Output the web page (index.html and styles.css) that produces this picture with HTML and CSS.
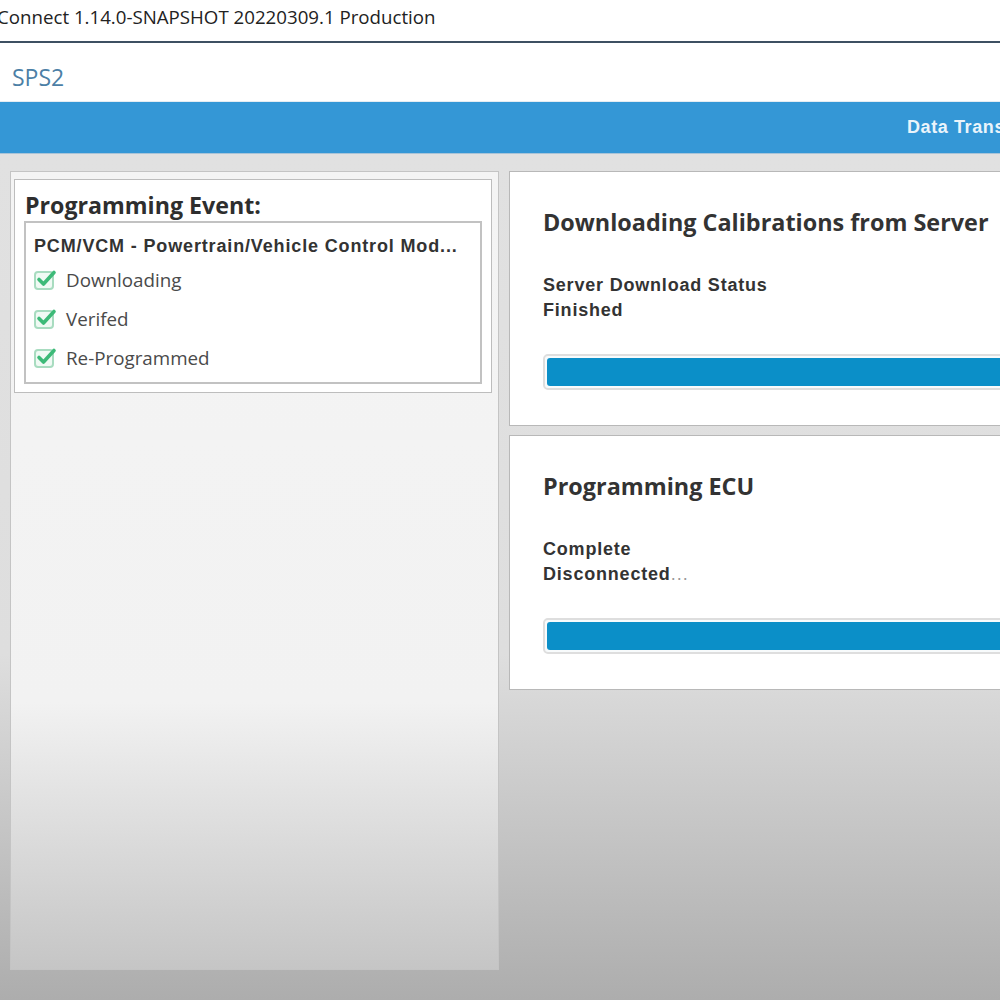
FILE: index.html
```html
<!DOCTYPE html>
<html>
<head>
<meta charset="utf-8">
<link rel="stylesheet" href="styles.css">
</head>
<body>
<div class="titlebar"><span class="title">Connect 1.14.0-SNAPSHOT 20220309.1 Production</span></div>
<div class="rule"></div>
<div class="header"><span class="brand">SPS2</span></div>
<div class="bluebar"><span class="bluetext">Data Transfer</span></div>
<div class="main">
  <div class="leftpanel">
    <div class="eventbox">
      <div class="eventtitle">Programming Event:</div>
      <div class="module">
        <div class="modname">PCM/VCM - Powertrain/Vehicle Control Mod...</div>
        <div class="step"><svg class="chk" width="26" height="24" viewBox="0 0 26 24"><rect x="2" y="5" width="18" height="17" rx="3" fill="#f0faf4" stroke="#a8dcc0" stroke-width="2"/><path d="M6 12.5 L10.5 17 L21 5.5" fill="none" stroke="#3dba78" stroke-width="3.6" stroke-linecap="round" stroke-linejoin="round"/></svg><span>Downloading</span></div>
        <div class="step"><svg class="chk" width="26" height="24" viewBox="0 0 26 24"><rect x="2" y="5" width="18" height="17" rx="3" fill="#f0faf4" stroke="#a8dcc0" stroke-width="2"/><path d="M6 12.5 L10.5 17 L21 5.5" fill="none" stroke="#3dba78" stroke-width="3.6" stroke-linecap="round" stroke-linejoin="round"/></svg><span>Verifed</span></div>
        <div class="step"><svg class="chk" width="26" height="24" viewBox="0 0 26 24"><rect x="2" y="5" width="18" height="17" rx="3" fill="#f0faf4" stroke="#a8dcc0" stroke-width="2"/><path d="M6 12.5 L10.5 17 L21 5.5" fill="none" stroke="#3dba78" stroke-width="3.6" stroke-linecap="round" stroke-linejoin="round"/></svg><span>Re-Programmed</span></div>
      </div>
    </div>
  </div>
  <div class="rightcol">
    <div class="card">
      <div class="cardtitle">Downloading Calibrations from Server</div>
      <div class="status">
        <div>Server Download Status</div>
        <div>Finished</div>
      </div>
      <div class="bar"><div class="fill"></div></div>
    </div>
    <div class="card">
      <div class="cardtitle">Programming ECU</div>
      <div class="status">
        <div>Complete</div>
        <div>Disconnected<span class="dots">...</span></div>
      </div>
      <div class="bar"><div class="fill"></div></div>
    </div>
  </div>
</div>
</body>
</html>
```

FILE: styles.css
```css
html, body {
  margin: 0;
  padding: 0;
  width: 1000px;
  height: 1000px;
  overflow: hidden;
}
body {
  font-family: "Open Sans", "Liberation Sans", sans-serif;
  color: #333;
  background: #adadad;
}
.titlebar {
  height: 41px;
  background: #fff;
  display: flex;
  align-items: flex-start;
  white-space: nowrap;
  overflow: hidden;
}
.title {
  font-size: 18.7px;
  line-height: 26px;
  margin-top: 4px;
  color: #222;
  margin-left: -3px;
}
.rule {
  height: 2px;
  background: #3d5062;
}
.header {
  height: 58px;
  background: #fff;
  display: flex;
  align-items: center;
  padding-left: 12px;
  border-bottom: 1px solid #e4ecf2;
}
.brand {
  font-size: 23px;
  color: #4c7fa6;
  margin-top: 9px;
}
.bluebar {
  height: 51px;
  background: #3497d6;
  display: flex;
  align-items: center;
  padding-left: 907px;
  white-space: nowrap;
  overflow: hidden;
  border-bottom: 1px solid #a9c4d8;
}
.bluetext {
  font-family: "Liberation Sans", Arial, sans-serif;
  font-weight: bold;
  font-size: 18px;
  letter-spacing: 0.6px;
  color: #eaf4fb;
}
.main {
  height: 846px;
  box-sizing: border-box;
  padding: 17px 0 0 10px;
  display: grid;
  grid-template-columns: 489px 560px;
  column-gap: 10px;
  align-items: start;
  overflow: hidden;
  background: linear-gradient(to bottom, #e1e1e1 0, #dedede 500px, #adadad 846px);
}
.leftpanel {
  height: 799px;
  box-sizing: border-box;
  border: 1px solid #c4c4c4;
  padding: 7px 6px 0 3px;
  background: linear-gradient(to bottom, #f4f4f4 0, #f2f2f2 530px, #c5c5c5 799px);
}
.eventbox {
  background: #fff;
  border: 1px solid #bdbdbd;
  padding: 11px 9px 8px 9px;
}
.eventtitle {
  font-weight: 700;
  font-size: 23.2px;
  line-height: 28px;
  color: #2e2e2e;
  padding-left: 1px;
  margin-bottom: 2px;
}
.module {
  border: 2px solid #c2c2c2;
  padding: 12px 8px 5px 8px;
}
.modname {
  font-family: "Liberation Sans", Arial, sans-serif;
  font-weight: bold;
  font-size: 18px;
  letter-spacing: 0.85px;
  line-height: 22px;
  color: #333;
  white-space: nowrap;
  margin-bottom: 3px;
}
.step {
  display: flex;
  align-items: center;
  height: 39px;
  font-size: 18.8px;
  color: #4a4a4a;
}
.chk {
  margin-right: 7px;
  margin-left: -1px;
  margin-top: -2px;
}
.rightcol {
  display: flex;
  flex-direction: column;
  gap: 9px;
}
.card {
  height: 255px;
  box-sizing: border-box;
  background: #fff;
  border: 1px solid #b8b8b8;
  padding: 35px 0 0 33px;
}
.cardtitle {
  font-weight: 700;
  font-size: 23.4px;
  line-height: 30px;
  color: #333;
  white-space: nowrap;
}
.status {
  margin-top: 36px;
  font-family: "Liberation Sans", Arial, sans-serif;
  font-weight: bold;
  font-size: 18px;
  letter-spacing: 0.8px;
  line-height: 25px;
  color: #333;
}
.dots {
  color: #9a9a9a;
  font-weight: normal;
  letter-spacing: 1px;
}
.bar {
  margin-top: 31px;
  height: 36px;
  box-sizing: border-box;
  border: 2px solid #dedede;
  border-radius: 5px;
  padding: 2px;
  background: #f8fbfc;
}
.fill {
  height: 100%;
  background: #0b8fc8;
  border-radius: 3px;
}
```
